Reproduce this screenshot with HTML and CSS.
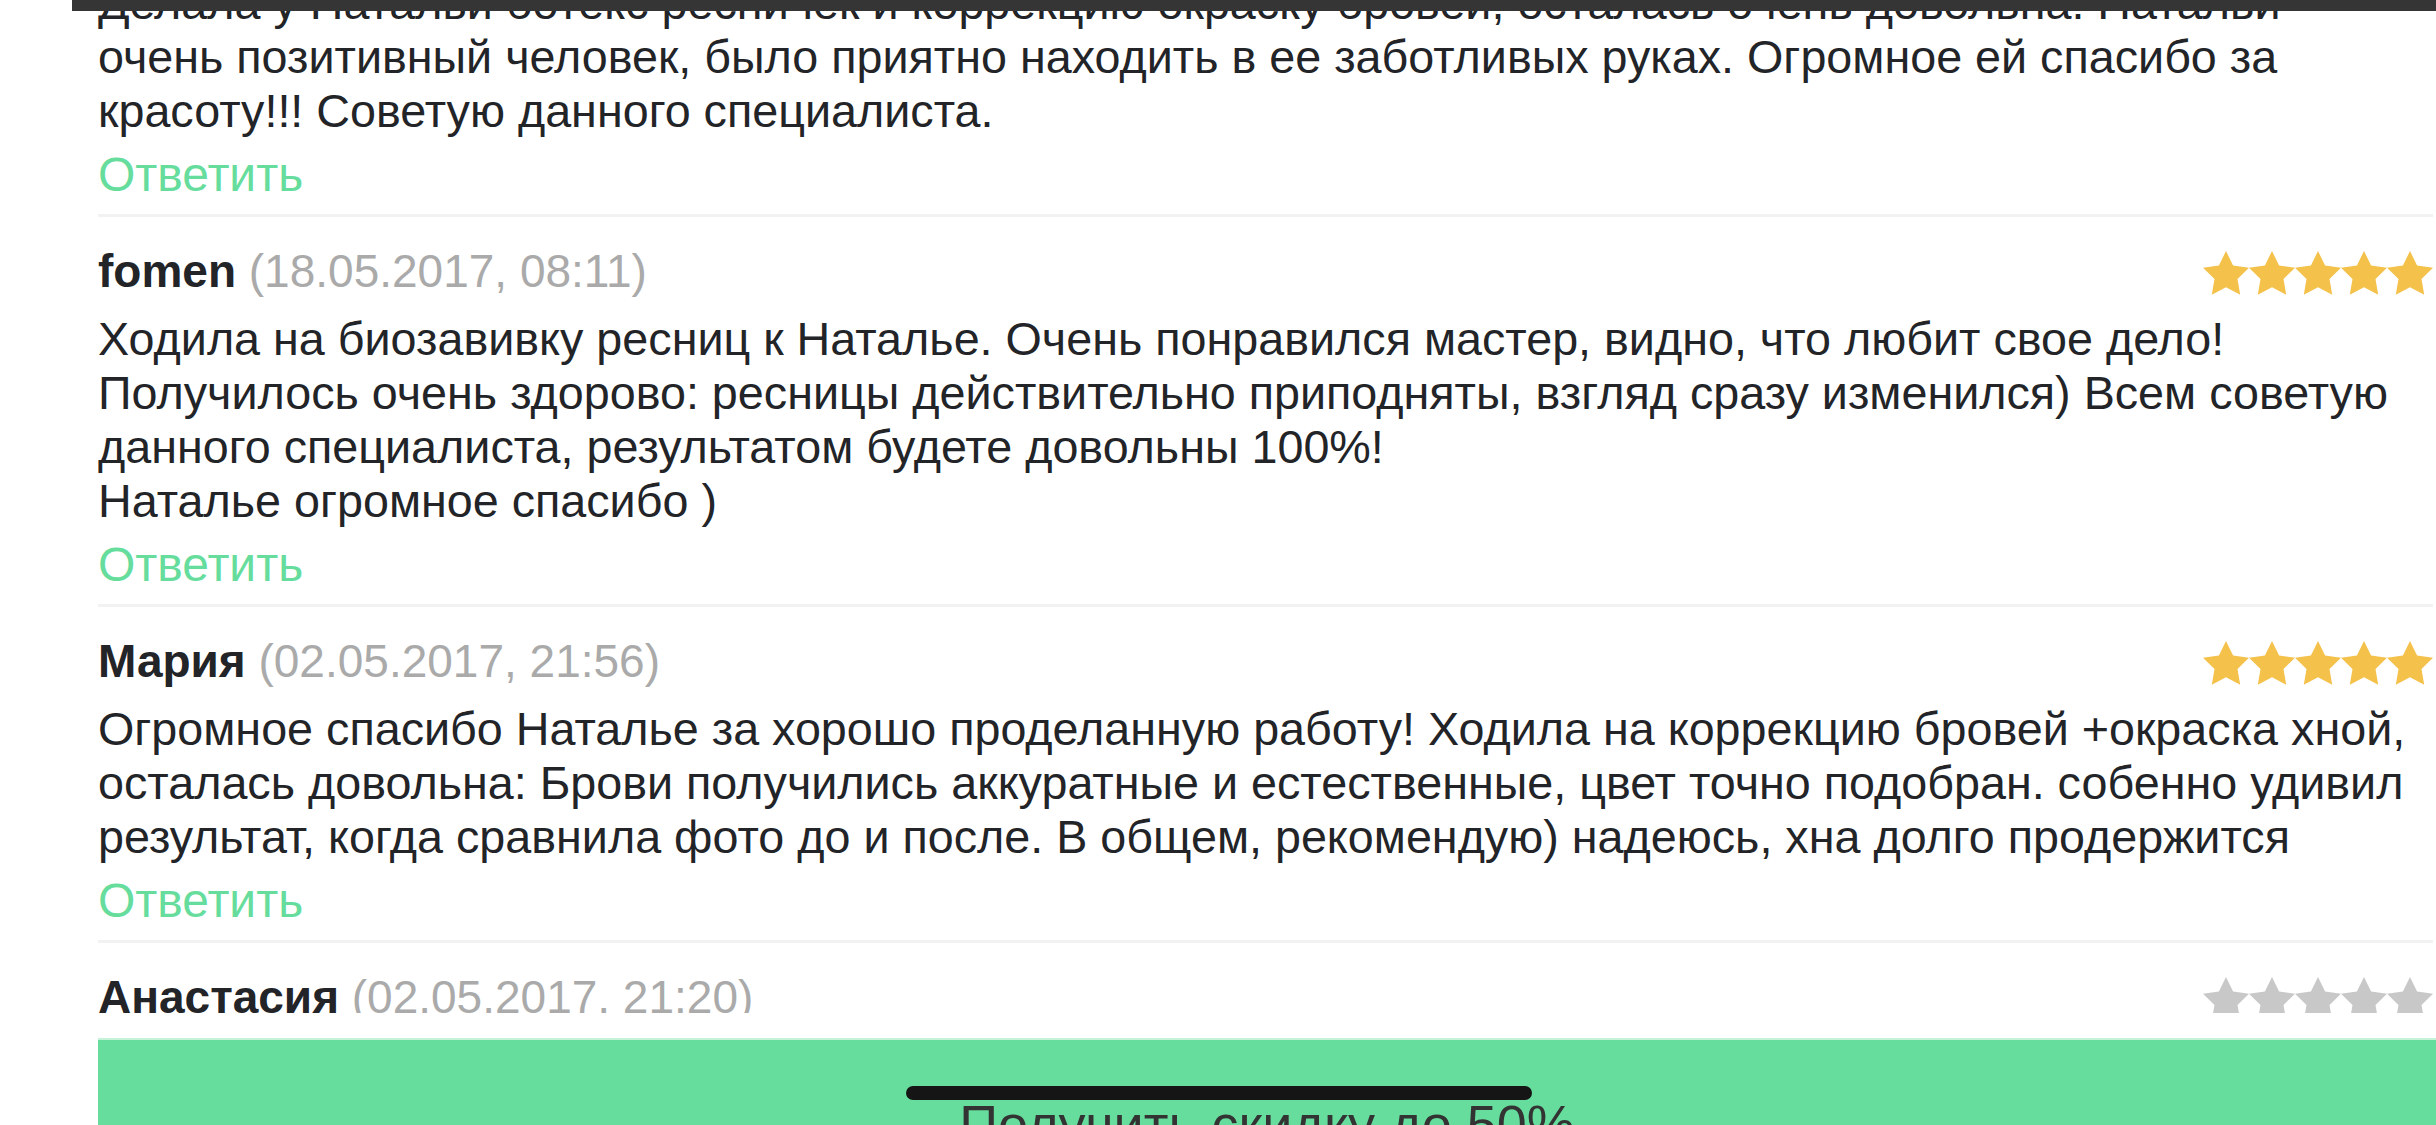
FILE: index.html
```html
<!DOCTYPE html>
<html lang="ru">
<head>
    <meta charset="UTF-8">
    <meta name="viewport" content="width=device-width, initial-scale=1.0">
    <title>Отзывы</title>
    <link rel="stylesheet" href="styles.css">
</head>
<body>
    <svg class="svg-defs" aria-hidden="true">
        <defs>
            <polygon id="star" points="23,0 30.1,14.4 46,16.7 34.5,27.9 37.2,43.7 23,36.3 8.8,43.7 11.5,27.9 0,16.7 15.9,14.4"/>
        </defs>
    </svg>

    <div class="topbar"></div>

    <main class="feed">
        <div class="feed-inner">
            <div class="comment comment-cut">
                <p class="comment-text">Делала у Натальи ботекс ресничек и коррекцию окраску бровей, осталась очень довольна. Натальи очень позитивный человек, было приятно находить в ее заботливых руках. Огромное ей спасибо за красоту!!! Советую данного специалиста.</p>
                <a class="reply" href="#">Ответить</a>
            </div>

            <div class="comment">
                <div class="comment-head">
                    <div><span class="author">fomen</span> <span class="date">(18.05.2017, 08:11)</span></div>
                    <svg class="stars" viewBox="0 0 230 44">
                        <use href="#star"/><use href="#star" x="46"/><use href="#star" x="92"/><use href="#star" x="138"/><use href="#star" x="184"/>
                    </svg>
                </div>
                <p class="comment-text">Ходила на биозавивку ресниц к Наталье. Очень понравился мастер, видно, что любит свое дело! Получилось очень здорово: ресницы действительно приподняты, взгляд сразу изменился) Всем советую данного специалиста, результатом будете довольны 100%!<br>Наталье огромное спасибо )</p>
                <a class="reply" href="#">Ответить</a>
            </div>

            <div class="comment">
                <div class="comment-head">
                    <div><span class="author">Мария</span> <span class="date">(02.05.2017, 21:56)</span></div>
                    <svg class="stars" viewBox="0 0 230 44">
                        <use href="#star"/><use href="#star" x="46"/><use href="#star" x="92"/><use href="#star" x="138"/><use href="#star" x="184"/>
                    </svg>
                </div>
                <p class="comment-text">Огромное спасибо Наталье за хорошо проделанную работу! Ходила на коррекцию бровей +окраска хной, осталась довольна: Брови получились аккуратные и естественные, цвет точно подобран. собенно удивил результат, когда сравнила фото до и после. В общем, рекомендую) надеюсь, хна долго продержится</p>
                <a class="reply" href="#">Ответить</a>
            </div>

            <div class="comment">
                <div class="comment-head">
                    <div><span class="author">Анастасия</span> <span class="date">(02.05.2017, 21:20)</span></div>
                    <svg class="stars stars-empty" viewBox="0 0 230 44">
                        <use href="#star"/><use href="#star" x="46"/><use href="#star" x="92"/><use href="#star" x="138"/><use href="#star" x="184"/>
                    </svg>
                </div>
                <p class="comment-text">Спасибо большое!</p>
                <a class="reply" href="#">Ответить</a>
            </div>
        </div>
    </main>

    <div class="bottom-bar">
        <a class="discount-btn" href="#">Получить скидку до 50%</a>
    </div>

    <div class="home-indicator"></div>
</body>
</html>
```

FILE: styles.css
```css
body {
    font-family: "Liberation Sans", Arial, Helvetica, sans-serif;
    background-color: #fff;
    color: #222428;
    margin: 0;
    padding: 0;
    height: 1125px;
    overflow: hidden;
    display: flex;
    flex-direction: column;
    position: relative;
}

.svg-defs {
    display: block;
    width: 0;
    height: 0;
}

.topbar {
    flex-shrink: 0;
    height: 11px;
    margin-left: 72px;
    background: #353535;
}

.feed {
    flex: 1;
    overflow: hidden;
    padding: 0 3px 0 98px;
}

.feed-inner {
    margin-top: -35px;
}

.comment {
    padding: 27px 0 12px;
    border-bottom: 3px solid #f2f2f2;
}

.comment-cut {
    padding-top: 0;
}

.comment-head {
    display: flex;
    justify-content: space-between;
    align-items: center;
    height: 54px;
    font-size: 46px;
    line-height: 54px;
}

.author {
    font-weight: bold;
}

.date {
    color: #aaa;
}

.stars {
    width: 230px;
    height: 44px;
    margin-top: 4px;
    fill: #f4c24b;
}

.stars-empty {
    fill: #c8c8c8;
}

.comment-text {
    margin: 14px 0 0;
    padding-right: 25px;
    font-size: 46.7px;
    line-height: 54px;
}

.comment-cut .comment-text {
    margin-top: 0;
}

.reply {
    display: block;
    margin-top: 10px;
    font-size: 48px;
    line-height: 54px;
    color: #66dd9c;
    text-decoration: none;
}

.bottom-bar {
    flex-shrink: 0;
    height: 112px;
    overflow: hidden;
    padding: 25px 0 0 98px;
    box-sizing: border-box;
    background: #fff;
}

.discount-btn {
    display: block;
    height: 150px;
    padding-top: 53px;
    box-sizing: border-box;
    background: #66dd9d;
    border-top: 2px solid #c6f2da;
    color: #333;
    font-size: 54px;
    line-height: 62px;
    text-align: center;
    text-decoration: none;
}

.home-indicator {
    position: absolute;
    left: 906px;
    bottom: 25px;
    width: 626px;
    height: 14px;
    border-radius: 7px;
    background: #151515;
}
```
